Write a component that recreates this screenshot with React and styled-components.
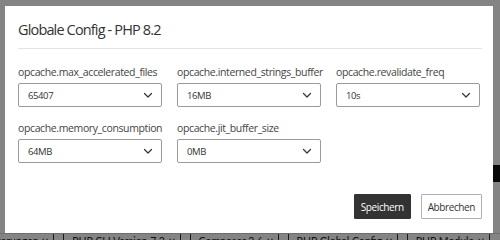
import React from "react";
import styled, { createGlobalStyle } from "styled-components";

const Global = createGlobalStyle`
  html, body { margin: 0; padding: 0; }
  body { font-family: "Open Sans", "Noto Sans", sans-serif; color: #333; background: #fff; }
  * { box-sizing: border-box; }
`;

const Page = styled.div`
  position: relative;
  width: 500px;
  height: 240px;
  overflow: hidden;
  display: flex;
  flex-direction: column;
  background: #f4f4f4;
`;

const PageBody = styled.div`
  flex: 1;
  display: flex;
  justify-content: flex-end;
  padding-top: 165px;
`;

const DarkChip = styled.div`
  width: 7px;
  height: 17px;
  background: #111;
  margin-bottom: auto;
`;

const TabBar = styled.div`
  display: flex;
  height: 7px;
  border-top: 1px solid #ccc;
  font-family: Lato, sans-serif;
  font-size: 10.5px;
  line-height: 14px;
  color: #222;
  white-space: nowrap;
`;

const Tab = styled.div`
  padding: 0 4px 0 8px;
  border-left: ${(p) => (p.$first ? "none" : "1px solid #333")};
  border-right: 1px solid #333;
  margin-right: 9px;
  margin-left: ${(p) => p.$shift || "0"};
`;

const Overlay = styled.div`
  position: absolute;
  inset: 0;
  background: rgba(0, 0, 0, 0.46);
  padding: 6px 7px 0 5px;
`;

const Modal = styled.div`
  width: 488px;
  height: 227px;
  background: #fff;
  padding: 13px 11px 14px 13px;
  display: flex;
  flex-direction: column;
`;

const Title = styled.h2`
  margin: 0;
  font-size: 14.5px;
  letter-spacing: -0.85px;
  font-weight: 400;
  line-height: 22px;
  color: #333;
  padding-bottom: 7px;
  border-bottom: 1px solid #e4e4e4;
`;

const Grid = styled.div`
  display: grid;
  grid-template-columns: repeat(3, 144px);
  column-gap: 15px;
  row-gap: 14px;
  margin-top: 16px;
`;

const Field = styled.div`
  display: flex;
  flex-direction: column;
  gap: 3px;
`;

const Label = styled.label`
  font-size: 10.5px;
  letter-spacing: -0.38px;
  line-height: 15px;
  color: #444;
  white-space: nowrap;
`;

const Select = styled.div`
  height: 24px;
  border: 1px solid #9a9a9a;
  border-radius: 2px;
  display: flex;
  align-items: center;
  justify-content: space-between;
  padding: 0 7px 0 9px;
  font-size: 9.5px;
  letter-spacing: -0.4px;
  color: #333;
`;

const Footer = styled.div`
  margin-top: auto;
  display: flex;
  justify-content: flex-end;
  gap: 10px;
`;

const Button = styled.button`
  height: 25px;
  padding: 0 6px;
  font-family: inherit;
  font-size: 10px;
  letter-spacing: -0.4px;
  border-radius: 1px;
  border: 1px solid ${(p) => (p.$primary ? "#333" : "#b0b0b0")};
  background: ${(p) => (p.$primary ? "#333" : "#fff")};
  color: ${(p) => (p.$primary ? "#fff" : "#333")};
`;

const Chevron = () => (
  <svg width="12" height="12" viewBox="0 0 24 24" fill="none" stroke="#333" strokeWidth="2.4" strokeLinecap="round" strokeLinejoin="round">
    <path d="m5 9 7 7 7-7" />
  </svg>
);

const fields = [
  ["opcache.max_accelerated_files", "65407"],
  ["opcache.interned_strings_buffer", "16MB"],
  ["opcache.revalidate_freq", "10s"],
  ["opcache.memory_consumption", "64MB"],
  ["opcache.jit_buffer_size", "0MB"],
];

export default function App() {
  return (
    <>
      <Global />
      <Page>
        <PageBody>
          <DarkChip />
        </PageBody>
        <TabBar>
          <Tab $first $shift="-37px">Erweiterungen ∨</Tab>
          <Tab>PHP CLI Version 7.2 ∨</Tab>
          <Tab>Composer 2.6 ∨</Tab>
          <Tab>PHP Global Config ∨</Tab>
          <Tab>PHP Module ∨</Tab>
        </TabBar>
        <Overlay>
          <Modal>
            <Title>Globale Config - PHP 8.2</Title>
            <Grid>
              {fields.map(([label, value]) => (
                <Field key={label}>
                  <Label>{label}</Label>
                  <Select>
                    <span>{value}</span>
                    <Chevron />
                  </Select>
                </Field>
              ))}
            </Grid>
            <Footer>
              <Button $primary>Speichern</Button>
              <Button>Abbrechen</Button>
            </Footer>
          </Modal>
        </Overlay>
      </Page>
    </>
  );
}
